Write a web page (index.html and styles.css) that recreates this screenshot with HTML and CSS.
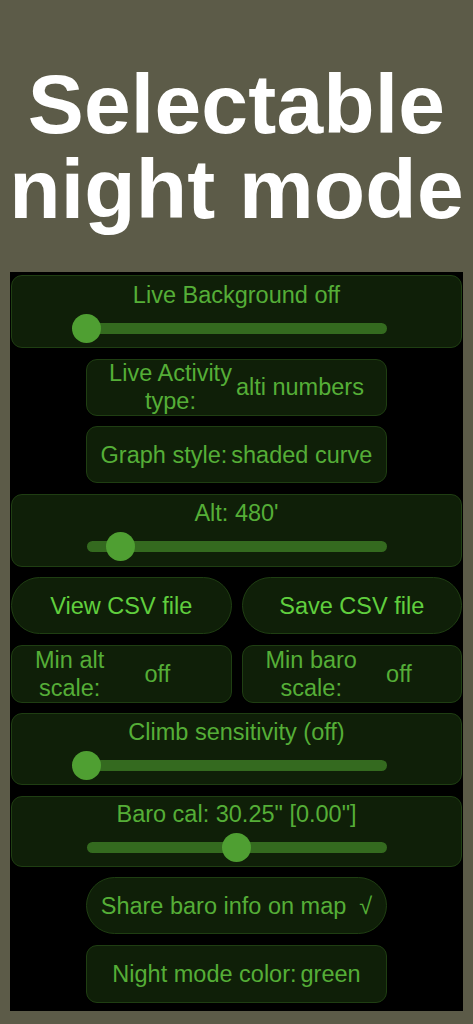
FILE: index.html
```html
<!DOCTYPE html>
<html lang="en">
<head>
<meta charset="utf-8">
<title>Selectable night mode</title>
<link rel="stylesheet" href="styles.css">
</head>
<body>
<header class="hero">
  <h1 class="hero-title">Selectable<br>night mode</h1>
</header>
<main class="panel">
  <section class="card slider-card">
    <div class="card-label">Live Background off</div>
    <div class="slider"><div class="track"></div><div class="thumb" style="left: 0%"></div></div>
  </section>

  <section class="card picker narrow">
    <span class="picker-label">Live Activity<br>type:</span>
    <span class="picker-value">alti numbers</span>
  </section>

  <section class="card picker narrow">
    <span class="picker-label">Graph style:</span>
    <span class="picker-value">shaded curve</span>
  </section>

  <section class="card slider-card">
    <div class="card-label">Alt: 480'</div>
    <div class="slider"><div class="track"></div><div class="thumb" style="left: 11.3%"></div></div>
  </section>

  <div class="row">
    <button class="card capsule bright">View CSV file</button>
    <button class="card capsule bright">Save CSV file</button>
  </div>

  <div class="row">
    <section class="card picker wide">
      <span class="picker-label">Min alt<br>scale:</span>
      <span class="picker-value fill">off</span>
    </section>
    <section class="card picker wide">
      <span class="picker-label">Min baro<br>scale:</span>
      <span class="picker-value fill">off</span>
    </section>
  </div>

  <section class="card slider-card short">
    <div class="card-label">Climb sensitivity (off)</div>
    <div class="slider"><div class="track"></div><div class="thumb" style="left: 0%"></div></div>
  </section>

  <section class="card slider-card shorter">
    <div class="card-label">Baro cal: 30.25" [0.00"]</div>
    <div class="slider"><div class="track"></div><div class="thumb" style="left: 50%"></div></div>
  </section>

  <button class="card capsule narrow">Share baro info on map<span class="check">√</span></button>

  <section class="card picker narrow tall">
    <span class="picker-label">Night mode color:</span>
    <span class="picker-value">green</span>
  </section>
</main>
</body>
</html>
```

FILE: styles.css
```css
* { box-sizing: border-box; }

html, body {
  margin: 0;
  padding: 0;
}

body {
  width: 473px;
  min-height: 1024px;
  background: #5c5b48;
  font-family: "Liberation Sans", Arial, sans-serif;
}

.hero {
  padding: 62px 0 40px;
}

.hero-title {
  margin: 0;
  color: #ffffff;
  font-family: "Liberation Sans", Arial, sans-serif;
  font-weight: 700;
  font-size: 84px;
  line-height: 85px;
  text-align: center;
  letter-spacing: 0.2px;
}

.panel {
  margin: 0 10px;
  width: 453px;
  background: #000000;
  padding: 3px 1px 8px;
  display: flex;
  flex-direction: column;
  gap: 10.5px;
}

.card {
  background: #0f1f08;
  border: 1px solid #1f3e12;
  border-radius: 11px;
  color: #55ae37;
  font-family: "Liberation Sans", Arial, sans-serif;
  font-size: 23.5px;
  line-height: 28px;
}

.slider-card {
  height: 73px;
  padding-top: 4.5px;
}
.slider-card.short { height: 72px; padding-top: 3.8px; }
.slider-card.shorter { height: 71px; padding-top: 3.8px; }

.card-label {
  text-align: center;
  white-space: nowrap;
}

.slider {
  position: relative;
  width: 300px;
  height: 29px;
  margin: 5px auto 0;
}

.track {
  position: absolute;
  left: 0;
  right: 0;
  top: 9px;
  height: 11px;
  border-radius: 6px;
  background: #346a1f;
}

.thumb {
  position: absolute;
  top: 0;
  width: 29px;
  height: 29px;
  margin-left: -14.5px;
  border-radius: 50%;
  background: #4f9f32;
}

.narrow {
  width: 301px;
  align-self: center;
}

.picker {
  height: 57px;
  display: flex;
  align-items: center;
  justify-content: center;
  gap: 4px;
  white-space: nowrap;
}
.picker.tall { height: 58px; }

.picker-label {
  text-align: center;
}

.row {
  display: flex;
  gap: 10px;
}

.row > .card {
  flex: 1 1 0;
}

.picker.wide {
  height: 58px;
  justify-content: flex-start;
  padding: 0 23px;
  gap: 3px;
}

.picker-value.fill {
  flex: 1 1 auto;
  text-align: center;
}

.capsule {
  height: 57px;
  border-radius: 29px;
  padding: 0;
  margin: 0;
  display: flex;
  align-items: center;
  justify-content: center;
  cursor: pointer;
}

.capsule.bright {
  color: #60cf3e;
}

.check {
  margin-left: 13px;
}
```
